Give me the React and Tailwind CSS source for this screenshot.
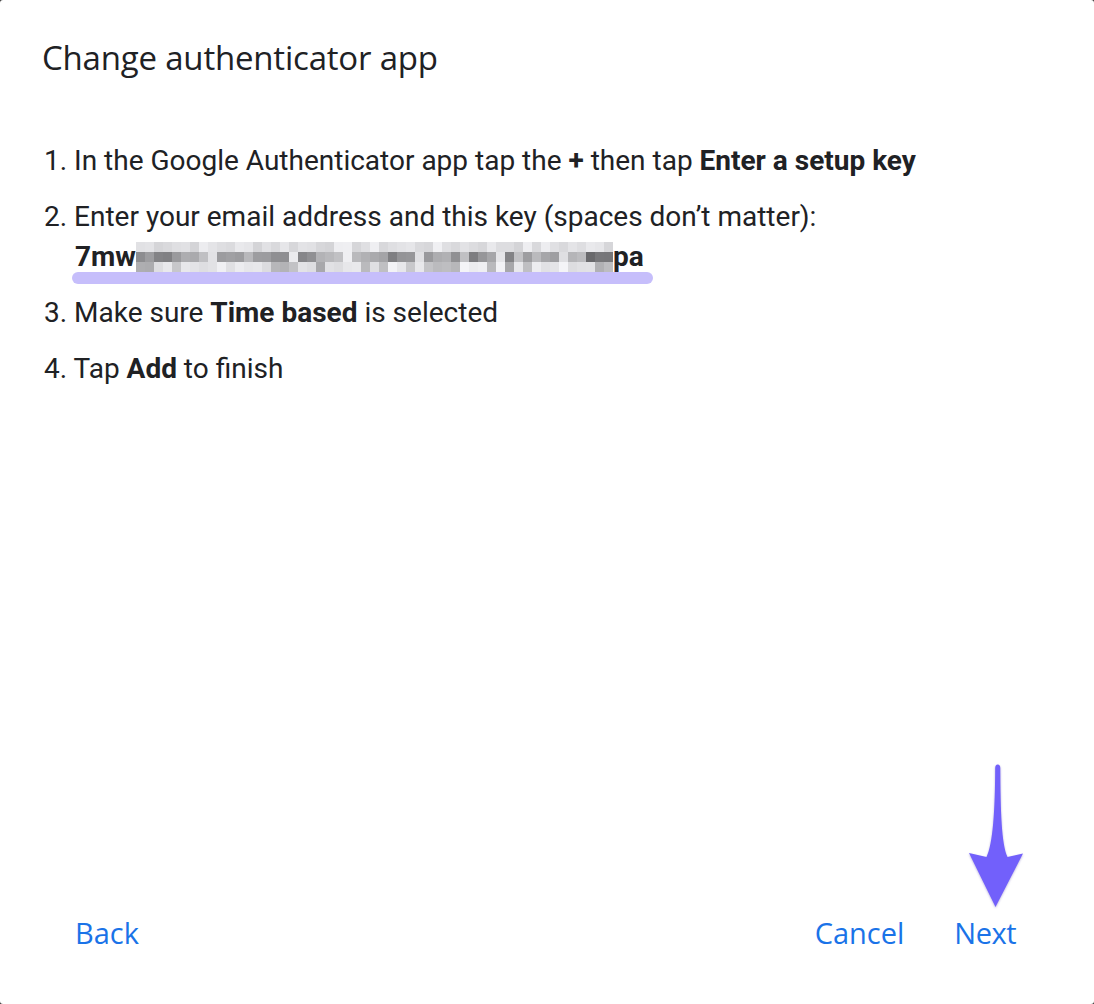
import React from "react";

// pixelated blur over the secret key
const Blur = () => {
  const cols = 53;
  const cell = 9;
  const gaps = [8, 17, 23, 31, 40, 47];
  let seed = 7;
  const rnd = () => {
    seed = (seed * 9301 + 49297) % 233280;
    return seed / 233280;
  };
  const rects = [];
  for (let r = 0; r < 3; r++) {
    for (let c = 0; c < cols; c++) {
      const gap = gaps.includes(c);
      let g;
      if (r === 0) g = 210 + rnd() * 30;
      else if (r === 1) g = gap ? 220 + rnd() * 20 : 125 + rnd() * 70;
      else g = rnd() > 0.7 ? 165 + rnd() * 40 : 220 + rnd() * 25;
      if (c >= 50 && r === 1) g = 105 + rnd() * 20;
      g = Math.round(g);
      rects.push(
        <rect
          key={r + "-" + c}
          x={c * cell}
          y={r * 10}
          width={cell}
          height={10}
          fill={`rgb(${g},${g},${g + 3})`}
        />
      );
    }
  }
  return (
    <svg width={cols * cell} height="30" className="inline-block align-middle -mt-[4px]">
      {rects}
    </svg>
  );
};

const Arrow = () => (
  <svg
    width="70"
    height="155"
    viewBox="0 0 70 155"
    className="absolute left-[960px] top-[760px] drop-shadow-[0_1px_1px_rgba(60,40,160,0.35)]"
  >
    <path
      d="M35.2 8 Q35.2 4.5 37.7 4.5 Q40.3 4.5 40.3 8 C40.5 50 41.5 84 47.5 97 L63 93.5 L35.5 147 L9 93 L26.5 97 C33 84 35 50 35.2 8 Z"
      fill="#7260fb"
    />
  </svg>
);

export default function App() {
  return (
    <div className="min-h-screen bg-[#3a3a3a]">
      <div className="relative flex h-[1004px] w-[1094px] flex-col rounded-[3px] bg-white text-[#202124]">
        <h1 className="px-[42px] pt-[39px] text-[33px] leading-[38px] font-['Open_Sans',sans-serif] tracking-[-0.2px]">
          Change authenticator app
        </h1>

        <ol className="mt-[64px] space-y-4 px-[44px] text-[28px] leading-[40px] font-['Roboto',sans-serif]">
          <li>
            1. In the Google Authenticator app tap the <b>+</b> then tap{" "}
            <b>Enter a setup key</b>
          </li>
          <li>
            <div>2. Enter your email address and this key (spaces don’t matter):</div>
            <div className="relative ml-[31px] w-fit font-bold">
              <span className="absolute left-[-3px] top-[35px] h-[12px] w-[581px] rounded-full bg-[#c6befb]" />
              <span className="relative">7mw</span>
              <span className="relative">
                <Blur />
              </span>
              <span className="relative">pa</span>
            </div>
          </li>
          <li>
            3. Make sure <b>Time based</b> is selected
          </li>
          <li>
            4. Tap <b>Add</b> to finish
          </li>
        </ol>

        <div className="mt-auto flex items-center pb-[55px] pl-[75px] pr-[78px] text-[29px] leading-[32px] font-medium text-[#1a73e8] font-['Open_Sans',sans-serif]">
          <button>Back</button>
          <div className="ml-auto flex gap-[50px]">
            <button>Cancel</button>
            <button className="tracking-[-0.5px]">Next</button>
          </div>
        </div>

        <Arrow />
      </div>
    </div>
  );
}
